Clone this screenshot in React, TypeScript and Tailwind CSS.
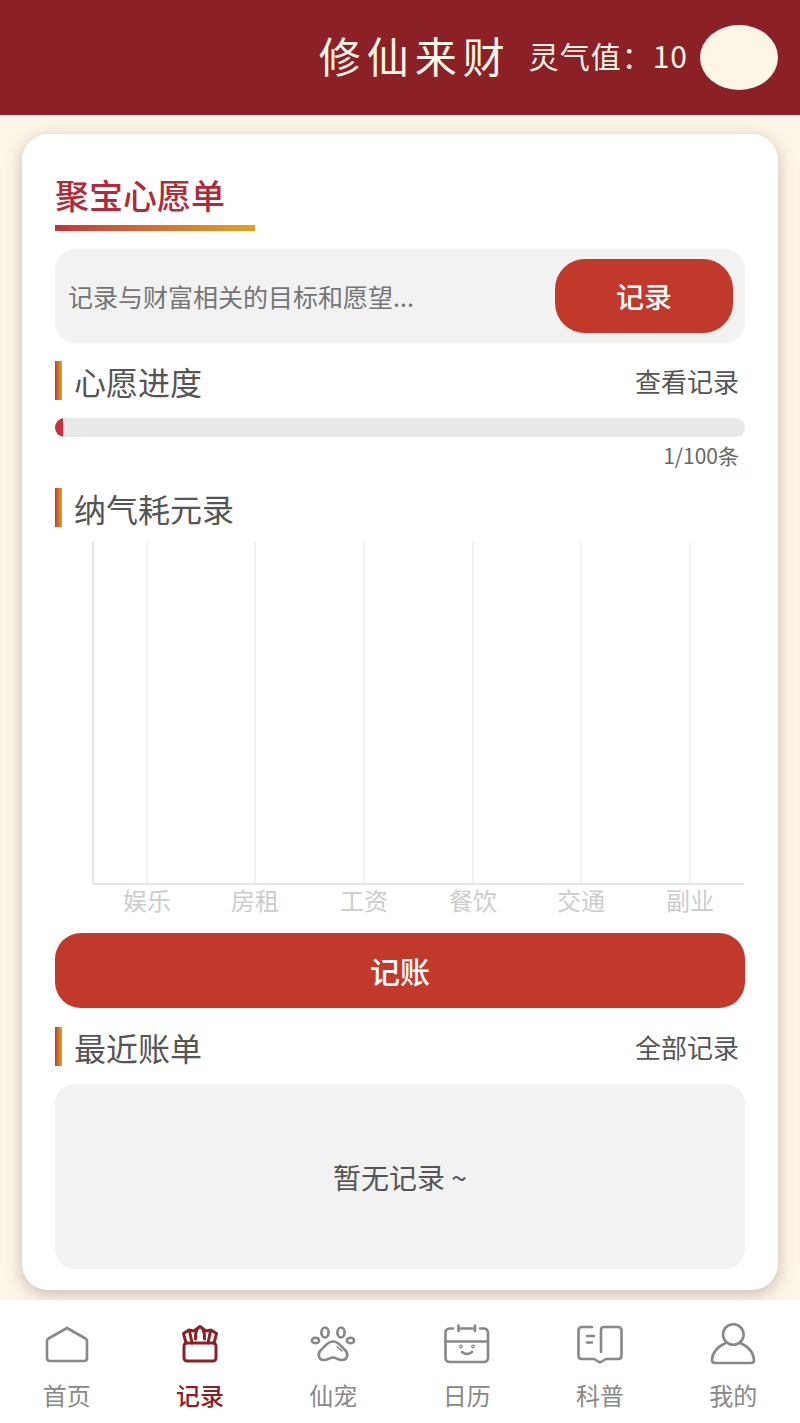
import type { ReactNode } from 'react';

const font = { cjk: 'font-["Noto_Sans_CJK_SC","Noto_Sans",sans-serif]' };

function SectionHead({ title, action }: { title: string; action?: string }) {
  return (
    <div className="flex h-[39px] items-center justify-between pr-[6px]">
      <div className="flex items-center">
        <div className="h-[39px] w-[7px] bg-gradient-to-r from-[#c0392b] to-[#daa520]" />
        <span className="ml-[12px] text-[32px] leading-none text-[#555]">{title}</span>
      </div>
      {action && <span className="text-[26px] leading-none text-[#555]">{action}</span>}
    </div>
  );
}

function Chart() {
  const xs = [147, 255, 364, 473, 581, 690];
  const labels = ['娱乐', '房租', '工资', '餐饮', '交通', '副业'];
  return (
    <svg width="690" height="384" viewBox="55 540 690 384" className="block">
      {xs.map((x) => (
        <line key={x} x1={x} x2={x} y1="545" y2="887" stroke="#eeeeee" strokeWidth="1.5" />
      ))}
      <line x1="93" x2="93" y1="545" y2="887" stroke="#dddddd" strokeWidth="1.5" />
      <line x1="93" x2="744" y1="887" y2="887" stroke="#dddddd" strokeWidth="1.5" />
      {xs.map((x, i) => (
        <text key={x} x={x} y="913" textAnchor="middle" fontSize="24" fill="#cccccc">
          {labels[i]}
        </text>
      ))}
    </svg>
  );
}

const stroke = {
  fill: 'none',
  strokeWidth: 2.6,
  strokeLinecap: 'round' as const,
  strokeLinejoin: 'round' as const,
};

function HomeIcon() {
  return (
    <svg width="48" height="48" viewBox="0 0 48 48" stroke="currentColor" {...stroke}>
      <path d="M24 8 L5.5 18.5 Q4 19.5 4 21 V38 Q4 41 7 41 H41 Q44 41 44 38 V21 Q44 19.5 42.5 18.5 Z" />
    </svg>
  );
}

function CrownIcon() {
  return (
    <svg width="48" height="48" viewBox="0 0 48 48" stroke="currentColor" {...stroke} strokeWidth={3}>
      <rect x="8" y="23" width="32" height="18" rx="3" />
      <path d="M10 23 L7.5 13.5 L13 10 L18 11 L24 6.5 L30 11 L35 10 L40.5 13.5 L38 23" />
      <path d="M16 23 L13.5 11 M32 23 L34.5 11 M19.5 19 Q19 14 21 9.5 M28.5 19 Q29 14 27 9.5" />
    </svg>
  );
}

function PawIcon() {
  return (
    <svg width="48" height="48" viewBox="0 0 48 48" stroke="currentColor" {...stroke}>
      <ellipse cx="6.5" cy="20.5" rx="3.6" ry="2.8" />
      <ellipse cx="16" cy="12.5" rx="3.6" ry="5" />
      <ellipse cx="32" cy="12.5" rx="3.6" ry="5" />
      <ellipse cx="41.5" cy="20.5" rx="3.6" ry="2.8" />
      <path d="M24 21.5 C18 21.5 15.5 27 12 30 C8 33.5 9.5 40 15 40 C19 40 21 37.5 24 37.5 C27 37.5 29 40 33 40 C38.5 40 40 33.5 36 30 C32.5 27 30 21.5 24 21.5 Z" />
      <path d="M28 26.5 L33 31" strokeWidth={1.6} />
    </svg>
  );
}

function CalendarIcon() {
  return (
    <svg width="48" height="48" viewBox="0 0 48 48" stroke="currentColor" {...stroke}>
      <path d="M10 8.5 H7 Q2.5 8.5 2.5 13 V37.5 Q2.5 42 7 42 H40.5 Q45 42 45 37.5 V13 Q45 8.5 40.5 8.5 H37" />
      <path d="M2.5 21.5 H45 M15.5 8.5 H32 M15.5 5.5 V11 M32 5.5 V11" />
      <path d="M19 32 Q24 36 29 32" />
      <circle cx="18" cy="26.5" r="0.6" />
      <circle cx="30" cy="26.5" r="0.6" />
    </svg>
  );
}

function BookIcon() {
  return (
    <svg width="48" height="48" viewBox="0 0 48 48" stroke="currentColor" {...stroke}>
      <path d="M16 7 H6 Q2.5 7 2.5 10.5 V36 Q2.5 39 6 39 H18 L24 42.5 L30 39 H42 Q45.5 39 45.5 36 V10.5 Q45.5 7 42 7 H28 Q25 7 25 10 V32" />
      <path d="M11 16 H18 M11 22.5 H16" />
    </svg>
  );
}

function UserIcon() {
  return (
    <svg width="48" height="48" viewBox="0 0 48 48" stroke="currentColor" {...stroke}>
      <circle cx="24.3" cy="14.5" r="10.3" />
      <path d="M16 23.5 C9 26 3 33 3 40 Q3 43 6 43 H42 Q45 43 45 40 C45 33 39 26 32 23.5" />
    </svg>
  );
}

const tabs: { label: string; icon: ReactNode; active?: boolean }[] = [
  { label: '首页', icon: <HomeIcon /> },
  { label: '记录', icon: <CrownIcon />, active: true },
  { label: '仙宠', icon: <PawIcon /> },
  { label: '日历', icon: <CalendarIcon /> },
  { label: '科普', icon: <BookIcon /> },
  { label: '我的', icon: <UserIcon /> },
];

export default function App() {
  return (
    <div className={`flex h-[1423px] w-[800px] flex-col overflow-hidden bg-[#fdf5e8] ${font.cjk}`}>
      <header className="flex h-[115px] items-center justify-end bg-[#8b2026] pr-[22px] text-[#fdf5e6]">
        <span className="mt-[-6px] text-[42px] leading-none tracking-[6px]">修仙来财</span>
        <span className="ml-[18px] mt-[-6px] text-[30px] leading-none tracking-[1px]">灵气值：10</span>
        <div className="ml-[12px] h-[65px] w-[78px] rounded-[50%] bg-[#fdf5e6]" />
      </header>

      <main className="mx-[22px] mt-[19px] h-[1156px] rounded-[26px] bg-white px-[33px] pt-[44px] shadow-[0_4px_16px_rgba(80,60,30,0.3)]">
        <div className="w-[200px]">
          <div className="text-[34px] font-medium leading-none text-[#b12a3a]">聚宝心愿单</div>
          <div className="mt-[13px] h-[6px] bg-gradient-to-r from-[#c0323c] to-[#daa520]" />
        </div>

        <div className="mt-[18px] flex h-[94px] items-center justify-between rounded-[20px] bg-[#f2f2f2] pl-[13px] pr-[12px]">
          <span className="text-[25px] leading-none text-[#757575]">记录与财富相关的目标和愿望...</span>
          <button className="h-[74px] w-[178px] rounded-[30px] bg-[#c0392b] text-[28px] font-medium text-white">记录</button>
        </div>

        <div className="mt-[18px]">
          <SectionHead title="心愿进度" action="查看记录" />
        </div>
        <div className="mt-[18px] h-[19px] overflow-hidden rounded-[10px] bg-[#e9e9e9]">
          <div className="h-full w-[8px] bg-[#c8323c]" />
        </div>
        <div className="mt-[6px] pr-[6px] text-right text-[21px] leading-[24px] text-[#666]">1/100条</div>

        <div className="mt-[21px]">
          <SectionHead title="纳气耗元录" />
        </div>
        <div className="mt-[10px]">
          <Chart />
        </div>

        <button className="mt-[12px] block h-[75px] w-full rounded-[26px] bg-[#c0392b] text-[30px] font-medium text-white">记账</button>

        <div className="mt-[19px]">
          <SectionHead title="最近账单" action="全部记录" />
        </div>
        <div className="mt-[18px] flex h-[185px] items-center justify-center rounded-[20px] bg-[#f2f2f2] text-[28px] text-[#555]">
          暂无记录 ~
        </div>
      </main>

      <nav className="mt-auto grid h-[123px] grid-cols-6 bg-white">
        {tabs.map((t) => (
          <div
            key={t.label}
            className={`flex flex-col items-center pt-[20px] ${t.active ? 'text-[#8b2026]' : 'text-[#888]'}`}
          >
            {t.icon}
            <span className={`mt-[15px] text-[24px] leading-none ${t.active ? 'font-medium' : ''}`}>{t.label}</span>
          </div>
        ))}
      </nav>
    </div>
  );
}
